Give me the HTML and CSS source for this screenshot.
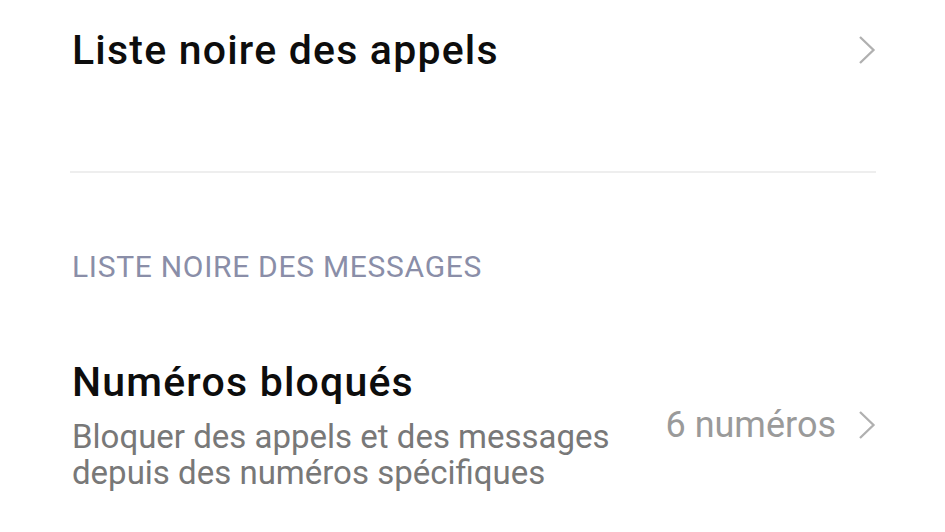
FILE: index.html
```html
<!DOCTYPE html>
<html lang="fr">
<head>
    <meta charset="UTF-8">
    <meta name="viewport" content="width=device-width, initial-scale=1.0">
    <title>Liste noire</title>
    <link rel="stylesheet" href="styles.css">
</head>
<body>
    <div class="settings">
        <div class="row row-single">
            <div class="row-text">
                <div class="row-title">Liste noire des appels</div>
            </div>
            <svg class="chevron" viewBox="0 0 18 30" width="18" height="30">
                <path d="M2 2 L15.5 15 L2 28" fill="none" stroke="#b0b0b0" stroke-width="2.3"/>
            </svg>
        </div>

        <div class="divider"></div>

        <div class="section-label">LISTE NOIRE DES MESSAGES</div>

        <div class="row row-double">
            <div class="row-text">
                <div class="row-title">Numéros bloqués</div>
                <div class="row-summary">Bloquer des appels et des messages<br>depuis des numéros spécifiques</div>
            </div>
            <div class="row-value">6 numéros</div>
            <svg class="chevron" viewBox="0 0 18 30" width="18" height="30">
                <path d="M2 2 L15.5 15 L2 28" fill="none" stroke="#b0b0b0" stroke-width="2.3"/>
            </svg>
        </div>
    </div>
</body>
</html>
```

FILE: styles.css
```css
body {
    margin: 0;
    background: #fff;
    font-family: Roboto, "Noto Sans", sans-serif;
}
.settings {
    padding: 0 69px 0 72px;
}
.row {
    display: flex;
    align-items: center;
}
.row-single {
    height: 100px;
}
.row-text {
    flex: 1;
}
.row-title {
    font-size: 41px;
    line-height: 48px;
    font-weight: 500;
    letter-spacing: 1.2px;
    color: #0d0d0d;
}
.chevron {
    display: block;
    margin-left: 22px;
}
.divider {
    height: 2px;
    background: #eeeeee;
    margin: 71px 0 0 -2px;
}
.section-label {
    font-size: 30px;
    line-height: 35px;
    letter-spacing: 0.7px;
    color: #8a8ea8;
    margin-top: 76px;
}
.row-double {
    margin-top: 74px;
}
.row-summary {
    font-size: 33px;
    line-height: 36px;
    color: #787878;
    margin-top: 13px;
}
.row-value {
    font-size: 36px;
    line-height: 42px;
    color: #9a9a9a;
}
```
